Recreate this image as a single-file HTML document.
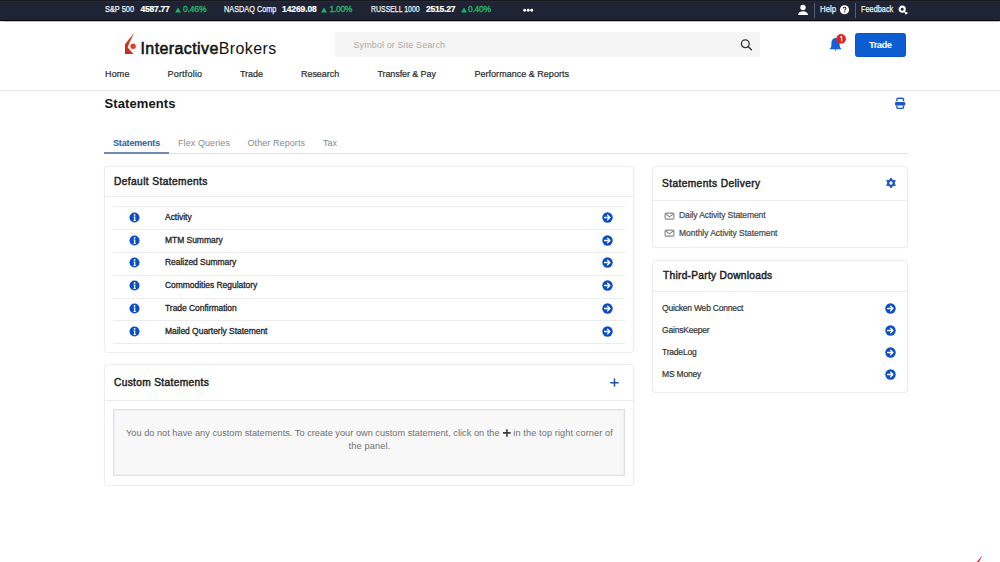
<!DOCTYPE html>
<html><head><meta charset="utf-8"><style>
*{margin:0;padding:0;box-sizing:border-box}
html,body{width:1000px;height:562px;overflow:hidden;background:#fff;font-family:'Liberation Sans', sans-serif}
.t{position:absolute;white-space:pre}
.ic{position:absolute;line-height:0}
.bx{position:absolute}
.panel{position:absolute;background:#fff;border:1px solid #ededed;border-radius:4px;box-shadow:0 0 1.5px rgba(0,0,0,0.05)}
.hl{position:absolute;height:1px;background:#ececec}
</style></head><body>
<div class="bx" style="left:0;top:0;width:1000px;height:21px;background:#1f2434;border-top:1px solid #18191e;border-bottom:1px solid #07080c;box-shadow:0 0.5px 1px rgba(0,0,0,0.25)"></div><div class="bx" style="left:0;top:1px;width:1000px;height:1px;background:#232a3e"></div>
<div class="bx" style="left:0;top:89.6px;width:1000px;height:1.2px;background:#ebebeb;box-shadow:0 1px 1.5px rgba(0,0,0,0.035)"></div>
<div class="bx" style="left:335px;top:32px;width:425px;height:25px;background:#f5f5f5"></div>
<div class="bx" style="left:855px;top:33px;width:51px;height:24px;background:#0b5dd1;border:1px solid #0a55c2;border-radius:2.5px"></div>
<div class="bx" style="left:104px;top:153px;width:804px;height:1px;background:#e3e3e3"></div>
<div class="bx" style="left:104px;top:152px;width:65px;height:2px;background:#6d8db8"></div>
<div class="panel" style="left:104px;top:166px;width:530px;height:187px"></div>
<div class="hl" style="left:105px;top:196px;width:528px"></div>
<div class="hl" style="left:113px;top:206px;width:512px"></div><div class="hl" style="left:113px;top:229px;width:512px"></div><div class="hl" style="left:113px;top:252px;width:512px"></div><div class="hl" style="left:113px;top:275px;width:512px"></div><div class="hl" style="left:113px;top:298px;width:512px"></div><div class="hl" style="left:113px;top:320px;width:512px"></div><div class="hl" style="left:113px;top:343px;width:512px"></div>
<div class="panel" style="left:104px;top:364px;width:530px;height:122px"></div>
<div class="hl" style="left:105px;top:400px;width:528px"></div>
<div class="bx" style="left:113px;top:409px;width:512px;height:67px;background:#f8f8f8;border:1px solid #e0e0e0;box-shadow:inset 0 0 0 1px #f1f1f1"></div>
<div class="panel" style="left:652px;top:166px;width:256px;height:82px"></div>
<div class="hl" style="left:653px;top:200px;width:254px"></div>
<div class="panel" style="left:652px;top:260px;width:256px;height:133px"></div>
<div class="hl" style="left:653px;top:291px;width:254px"></div>
<div id="sp" class="t" style="left:104.5px;top:4.78px;font-size:8.5px;line-height:8.5px;font-weight:400;color:#eef0f3;letter-spacing:0px;-webkit-text-stroke:0.25px #eef0f3;transform-origin:0 0;transform:scaleX(0.87)">S&amp;P 500</div><div id="sp_v" class="t" style="left:140.5px;top:4.78px;font-size:8.5px;line-height:8.5px;font-weight:700;color:#fff;letter-spacing:-0.25px;-webkit-text-stroke:0.2px #fff">4587.77</div><div id="sp_p" class="t" style="left:183px;top:4.78px;font-size:8.5px;line-height:8.5px;font-weight:400;color:#27b36b;letter-spacing:-0.15px;-webkit-text-stroke:0.35px #27b36b">0.46%</div><div id="nq" class="t" style="left:223.9px;top:4.78px;font-size:8.5px;line-height:8.5px;font-weight:400;color:#eef0f3;letter-spacing:0px;-webkit-text-stroke:0.25px #eef0f3;transform-origin:0 0;transform:scaleX(0.86)">NASDAQ Comp</div><div id="nq_v" class="t" style="left:282px;top:4.78px;font-size:8.5px;line-height:8.5px;font-weight:700;color:#fff;letter-spacing:-0.1px;-webkit-text-stroke:0.2px #fff">14269.08</div><div id="nq_p" class="t" style="left:329.5px;top:4.78px;font-size:8.5px;line-height:8.5px;font-weight:400;color:#27b36b;letter-spacing:-0.3px;-webkit-text-stroke:0.35px #27b36b">1.00%</div><div id="ru" class="t" style="left:370.9px;top:4.78px;font-size:8.5px;line-height:8.5px;font-weight:400;color:#eef0f3;letter-spacing:0px;-webkit-text-stroke:0.25px #eef0f3;transform-origin:0 0;transform:scaleX(0.815)">RUSSELL 1000</div><div id="ru_v" class="t" style="left:426px;top:4.78px;font-size:8.5px;line-height:8.5px;font-weight:700;color:#fff;letter-spacing:-0.2px;-webkit-text-stroke:0.2px #fff">2515.27</div><div id="ru_p" class="t" style="left:468px;top:4.78px;font-size:8.5px;line-height:8.5px;font-weight:400;color:#27b36b;letter-spacing:-0.25px;-webkit-text-stroke:0.35px #27b36b">0.40%</div><div id="help" class="t" style="left:819.7px;top:4.78px;font-size:8.5px;line-height:8.5px;font-weight:400;color:#eef0f3;letter-spacing:0px;-webkit-text-stroke:0.25px #eef0f3;transform-origin:0 0;transform:scaleX(0.92)">Help</div><div id="fb" class="t" style="left:860.9px;top:4.78px;font-size:8.5px;line-height:8.5px;font-weight:400;color:#eef0f3;letter-spacing:0px;-webkit-text-stroke:0.25px #eef0f3;transform-origin:0 0;transform:scaleX(0.865)">Feedback</div><div id="logo" class="t" style="left:140.5px;top:40.80px;font-size:16px;line-height:16px;font-weight:400;color:#111;letter-spacing:0.4px;"><span style="-webkit-text-stroke:0.55px #111">Interactive</span>Brokers</div><div id="srch" class="t" style="left:353.5px;top:41.15px;font-size:9px;line-height:9px;font-weight:400;color:#ababab;letter-spacing:0.1px;">Symbol or Site Search</div><div id="trade" class="t" style="left:869px;top:39.92px;font-size:9.5px;line-height:9.5px;font-weight:700;color:#fff;letter-spacing:-0.6px;">Trade</div><div id="n1" class="t" style="left:105px;top:70.35px;font-size:9px;line-height:9px;font-weight:400;color:#2b2b2b;letter-spacing:0.15px;-webkit-text-stroke:0.2px #2b2b2b">Home</div><div id="n2" class="t" style="left:167.5px;top:70.35px;font-size:9px;line-height:9px;font-weight:400;color:#2b2b2b;letter-spacing:0.2px;-webkit-text-stroke:0.2px #2b2b2b">Portfolio</div><div id="n3" class="t" style="left:240px;top:70.35px;font-size:9px;line-height:9px;font-weight:400;color:#2b2b2b;letter-spacing:-0.05px;-webkit-text-stroke:0.2px #2b2b2b">Trade</div><div id="n4" class="t" style="left:301px;top:70.35px;font-size:9px;line-height:9px;font-weight:400;color:#2b2b2b;letter-spacing:-0.05px;-webkit-text-stroke:0.2px #2b2b2b">Research</div><div id="n5" class="t" style="left:377.5px;top:70.35px;font-size:9px;line-height:9px;font-weight:400;color:#2b2b2b;letter-spacing:-0.1px;-webkit-text-stroke:0.2px #2b2b2b">Transfer &amp; Pay</div><div id="n6" class="t" style="left:474.5px;top:70.35px;font-size:9px;line-height:9px;font-weight:400;color:#2b2b2b;letter-spacing:0.02px;-webkit-text-stroke:0.2px #2b2b2b">Performance &amp; Reports</div><div id="title" class="t" style="left:104.5px;top:96.95px;font-size:13px;line-height:13px;font-weight:700;color:#151515;letter-spacing:0.1px;">Statements</div><div id="tab1" class="t" style="left:113px;top:139.05px;font-size:9px;line-height:9px;font-weight:700;color:#2a5ba6;letter-spacing:-0.15px;">Statements</div><div id="tab2" class="t" style="left:178px;top:139.05px;font-size:9px;line-height:9px;font-weight:400;color:#8a8a8a;letter-spacing:0.08px;">Flex Queries</div><div id="tab3" class="t" style="left:247.5px;top:139.05px;font-size:9px;line-height:9px;font-weight:400;color:#8a8a8a;letter-spacing:0.08px;">Other Reports</div><div id="tab4" class="t" style="left:323px;top:139.05px;font-size:9px;line-height:9px;font-weight:400;color:#8a8a8a;letter-spacing:0px;">Tax</div><div id="ds" class="t" style="left:114px;top:177.13px;font-size:10.2px;line-height:10.2px;font-weight:400;color:#1e1e1e;letter-spacing:0.4px;-webkit-text-stroke:0.45px #1e1e1e">Default Statements</div><div id="r0" class="t" style="left:165px;top:212.78px;font-size:8.5px;line-height:8.5px;font-weight:400;color:#262626;letter-spacing:-0.04px;-webkit-text-stroke:0.3px #262626">Activity</div><div id="r1" class="t" style="left:165px;top:235.58px;font-size:8.5px;line-height:8.5px;font-weight:400;color:#262626;letter-spacing:-0.04px;-webkit-text-stroke:0.3px #262626">MTM Summary</div><div id="r2" class="t" style="left:165px;top:258.38px;font-size:8.5px;line-height:8.5px;font-weight:400;color:#262626;letter-spacing:-0.04px;-webkit-text-stroke:0.3px #262626">Realized Summary</div><div id="r3" class="t" style="left:165px;top:281.17px;font-size:8.5px;line-height:8.5px;font-weight:400;color:#262626;letter-spacing:-0.04px;-webkit-text-stroke:0.3px #262626">Commodities Regulatory</div><div id="r4" class="t" style="left:165px;top:303.97px;font-size:8.5px;line-height:8.5px;font-weight:400;color:#262626;letter-spacing:-0.04px;-webkit-text-stroke:0.3px #262626">Trade Confirmation</div><div id="r5" class="t" style="left:165px;top:326.77px;font-size:8.5px;line-height:8.5px;font-weight:400;color:#262626;letter-spacing:-0.04px;-webkit-text-stroke:0.3px #262626">Mailed Quarterly Statement</div><div id="cs" class="t" style="left:114px;top:377.93px;font-size:10.2px;line-height:10.2px;font-weight:400;color:#1e1e1e;letter-spacing:0.33px;-webkit-text-stroke:0.45px #1e1e1e">Custom Statements</div><div id="msg1" class="t" style="left:126px;top:429.18px;font-size:9.2px;line-height:9.2px;font-weight:400;color:#707070;letter-spacing:0.02px;">You do not have any custom statements. To create your own custom statement, click on the</div><div id="msg2" class="t" style="left:513.3px;top:429.18px;font-size:9.2px;line-height:9.2px;font-weight:400;color:#707070;letter-spacing:0.1px;">in the top right corner of</div><div id="msg3" class="t" style="left:348.5px;top:442.18px;font-size:9.2px;line-height:9.2px;font-weight:400;color:#707070;letter-spacing:0.15px;">the panel.</div><div id="sd" class="t" style="left:662px;top:178.63px;font-size:10.2px;line-height:10.2px;font-weight:400;color:#1e1e1e;letter-spacing:0.39px;-webkit-text-stroke:0.45px #1e1e1e">Statements Delivery</div><div id="d1" class="t" style="left:679px;top:211.08px;font-size:8.5px;line-height:8.5px;font-weight:400;color:#444;letter-spacing:-0.1px;-webkit-text-stroke:0.2px #444">Daily Activity Statement</div><div id="d2" class="t" style="left:679px;top:228.58px;font-size:8.5px;line-height:8.5px;font-weight:400;color:#444;letter-spacing:-0.05px;-webkit-text-stroke:0.2px #444">Monthly Activity Statement</div><div id="tp" class="t" style="left:663px;top:271.13px;font-size:10.2px;line-height:10.2px;font-weight:400;color:#1e1e1e;letter-spacing:0.28px;-webkit-text-stroke:0.45px #1e1e1e">Third-Party Downloads</div><div id="q0" class="t" style="left:662px;top:303.77px;font-size:8.5px;line-height:8.5px;font-weight:400;color:#333;letter-spacing:-0.2px;-webkit-text-stroke:0.2px #333">Quicken Web Connect</div><div id="q1" class="t" style="left:662px;top:325.77px;font-size:8.5px;line-height:8.5px;font-weight:400;color:#333;letter-spacing:-0.2px;-webkit-text-stroke:0.2px #333">GainsKeeper</div><div id="q2" class="t" style="left:662px;top:348.27px;font-size:8.5px;line-height:8.5px;font-weight:400;color:#333;letter-spacing:-0.2px;-webkit-text-stroke:0.2px #333">TradeLog</div><div id="q3" class="t" style="left:662px;top:370.27px;font-size:8.5px;line-height:8.5px;font-weight:400;color:#333;letter-spacing:-0.2px;-webkit-text-stroke:0.2px #333">MS Money</div>
<div class="ic" style="left:129.3px;top:211.7px"><svg width="11" height="11" viewBox="0 0 11 11"><circle cx="5.5" cy="5.5" r="5.05" fill="#0b4fc4"/><circle cx="5.6" cy="2.9" r="0.9" fill="#fff"/><path d="M4.6 4.6h1.7v3.6h0.6v0.9H4.4V8.2h0.6V5.5h-0.4z" fill="#fff"/></svg></div><div class="ic" style="left:602.1px;top:211.7px"><svg width="11" height="11" viewBox="0 0 11 11"><circle cx="5.5" cy="5.5" r="5.2" fill="#0b4fc4"/><path d="M2.6 5.5h5M5.6 3.2l2.3 2.3-2.3 2.3" stroke="#fff" stroke-width="1.3" fill="none" stroke-linecap="round" stroke-linejoin="round"/></svg></div><div class="ic" style="left:129.3px;top:234.5px"><svg width="11" height="11" viewBox="0 0 11 11"><circle cx="5.5" cy="5.5" r="5.05" fill="#0b4fc4"/><circle cx="5.6" cy="2.9" r="0.9" fill="#fff"/><path d="M4.6 4.6h1.7v3.6h0.6v0.9H4.4V8.2h0.6V5.5h-0.4z" fill="#fff"/></svg></div><div class="ic" style="left:602.1px;top:234.5px"><svg width="11" height="11" viewBox="0 0 11 11"><circle cx="5.5" cy="5.5" r="5.2" fill="#0b4fc4"/><path d="M2.6 5.5h5M5.6 3.2l2.3 2.3-2.3 2.3" stroke="#fff" stroke-width="1.3" fill="none" stroke-linecap="round" stroke-linejoin="round"/></svg></div><div class="ic" style="left:129.3px;top:257.3px"><svg width="11" height="11" viewBox="0 0 11 11"><circle cx="5.5" cy="5.5" r="5.05" fill="#0b4fc4"/><circle cx="5.6" cy="2.9" r="0.9" fill="#fff"/><path d="M4.6 4.6h1.7v3.6h0.6v0.9H4.4V8.2h0.6V5.5h-0.4z" fill="#fff"/></svg></div><div class="ic" style="left:602.1px;top:257.3px"><svg width="11" height="11" viewBox="0 0 11 11"><circle cx="5.5" cy="5.5" r="5.2" fill="#0b4fc4"/><path d="M2.6 5.5h5M5.6 3.2l2.3 2.3-2.3 2.3" stroke="#fff" stroke-width="1.3" fill="none" stroke-linecap="round" stroke-linejoin="round"/></svg></div><div class="ic" style="left:129.3px;top:280.1px"><svg width="11" height="11" viewBox="0 0 11 11"><circle cx="5.5" cy="5.5" r="5.05" fill="#0b4fc4"/><circle cx="5.6" cy="2.9" r="0.9" fill="#fff"/><path d="M4.6 4.6h1.7v3.6h0.6v0.9H4.4V8.2h0.6V5.5h-0.4z" fill="#fff"/></svg></div><div class="ic" style="left:602.1px;top:280.1px"><svg width="11" height="11" viewBox="0 0 11 11"><circle cx="5.5" cy="5.5" r="5.2" fill="#0b4fc4"/><path d="M2.6 5.5h5M5.6 3.2l2.3 2.3-2.3 2.3" stroke="#fff" stroke-width="1.3" fill="none" stroke-linecap="round" stroke-linejoin="round"/></svg></div><div class="ic" style="left:129.3px;top:302.9px"><svg width="11" height="11" viewBox="0 0 11 11"><circle cx="5.5" cy="5.5" r="5.05" fill="#0b4fc4"/><circle cx="5.6" cy="2.9" r="0.9" fill="#fff"/><path d="M4.6 4.6h1.7v3.6h0.6v0.9H4.4V8.2h0.6V5.5h-0.4z" fill="#fff"/></svg></div><div class="ic" style="left:602.1px;top:302.9px"><svg width="11" height="11" viewBox="0 0 11 11"><circle cx="5.5" cy="5.5" r="5.2" fill="#0b4fc4"/><path d="M2.6 5.5h5M5.6 3.2l2.3 2.3-2.3 2.3" stroke="#fff" stroke-width="1.3" fill="none" stroke-linecap="round" stroke-linejoin="round"/></svg></div><div class="ic" style="left:129.3px;top:325.7px"><svg width="11" height="11" viewBox="0 0 11 11"><circle cx="5.5" cy="5.5" r="5.05" fill="#0b4fc4"/><circle cx="5.6" cy="2.9" r="0.9" fill="#fff"/><path d="M4.6 4.6h1.7v3.6h0.6v0.9H4.4V8.2h0.6V5.5h-0.4z" fill="#fff"/></svg></div><div class="ic" style="left:602.1px;top:325.7px"><svg width="11" height="11" viewBox="0 0 11 11"><circle cx="5.5" cy="5.5" r="5.2" fill="#0b4fc4"/><path d="M2.6 5.5h5M5.6 3.2l2.3 2.3-2.3 2.3" stroke="#fff" stroke-width="1.3" fill="none" stroke-linecap="round" stroke-linejoin="round"/></svg></div><div class="ic" style="left:885px;top:302.6px"><svg width="11" height="11" viewBox="0 0 11 11"><circle cx="5.5" cy="5.5" r="5.2" fill="#0b4fc4"/><path d="M2.6 5.5h5M5.6 3.2l2.3 2.3-2.3 2.3" stroke="#fff" stroke-width="1.3" fill="none" stroke-linecap="round" stroke-linejoin="round"/></svg></div><div class="ic" style="left:885px;top:324.5px"><svg width="11" height="11" viewBox="0 0 11 11"><circle cx="5.5" cy="5.5" r="5.2" fill="#0b4fc4"/><path d="M2.6 5.5h5M5.6 3.2l2.3 2.3-2.3 2.3" stroke="#fff" stroke-width="1.3" fill="none" stroke-linecap="round" stroke-linejoin="round"/></svg></div><div class="ic" style="left:885px;top:347.2px"><svg width="11" height="11" viewBox="0 0 11 11"><circle cx="5.5" cy="5.5" r="5.2" fill="#0b4fc4"/><path d="M2.6 5.5h5M5.6 3.2l2.3 2.3-2.3 2.3" stroke="#fff" stroke-width="1.3" fill="none" stroke-linecap="round" stroke-linejoin="round"/></svg></div><div class="ic" style="left:885px;top:369.3px"><svg width="11" height="11" viewBox="0 0 11 11"><circle cx="5.5" cy="5.5" r="5.2" fill="#0b4fc4"/><path d="M2.6 5.5h5M5.6 3.2l2.3 2.3-2.3 2.3" stroke="#fff" stroke-width="1.3" fill="none" stroke-linecap="round" stroke-linejoin="round"/></svg></div><svg class="ic" style="left:174.5px;top:6.5px" width="6" height="6" viewBox="0 0 6 6"><path d="M3 0.6L5.9 5.6H0.1z" fill="#1fb467"/></svg><svg class="ic" style="left:321px;top:6.5px" width="6" height="6" viewBox="0 0 6 6"><path d="M3 0.6L5.9 5.6H0.1z" fill="#1fb467"/></svg><svg class="ic" style="left:460.5px;top:6.5px" width="6" height="6" viewBox="0 0 6 6"><path d="M3 0.6L5.9 5.6H0.1z" fill="#1fb467"/></svg><svg class="ic" style="left:520px;top:7px" width="16" height="6" viewBox="0 0 16 6"><circle cx="4.7" cy="3.3" r="1.45" fill="#fff"/><circle cx="8.2" cy="3.3" r="1.45" fill="#fff"/><circle cx="11.7" cy="3.3" r="1.45" fill="#fff"/></svg><svg class="ic" style="left:796px;top:3px" width="14" height="14" viewBox="0 0 14 14"><circle cx="7" cy="4.5" r="2.7" fill="#fff"/><path d="M1.9 12.1C2.1 9.6 4.3 8.3 7 8.3S11.9 9.6 12.1 12.1z" fill="#fff"/></svg><div class="bx" style="left:813.5px;top:3px;width:1px;height:15px;background:#596073"></div><div class="bx" style="left:855px;top:3px;width:1px;height:15px;background:#596073"></div><svg class="ic" style="left:839px;top:4px" width="12" height="12" viewBox="0 0 12 12"><circle cx="5.5" cy="5.75" r="4.6" fill="#fff"/><path d="M4.2 4.6C4.2 3.8 4.8 3.3 5.6 3.3S6.9 3.8 6.9 4.5C6.9 5.3 5.7 5.4 5.7 6.4" stroke="#1d2232" stroke-width="1.1" fill="none"/><circle cx="5.7" cy="7.9" r="0.65" fill="#1d2232"/></svg><svg class="ic" style="left:897px;top:4px" width="12" height="12" viewBox="0 0 12 12"><circle cx="5.2" cy="5.2" r="2.55" fill="none" stroke="#fff" stroke-width="2.1"/><path d="M7.0 7.2L10.7 8.4L10.2 9.9L8.4 10.6z" fill="#fff"/></svg><svg class="ic" style="left:122px;top:30px" width="16" height="26" viewBox="0 0 16 26"><defs><linearGradient id="lg" x1="0" y1="1" x2="1" y2="0"><stop offset="0" stop-color="#c0261b"/><stop offset="1" stop-color="#ea4a2e"/></linearGradient></defs><path d="M12.2 2.6L3 14.3V24H11.6L5.7 17.4L6.2 15.8z" fill="url(#lg)"/><circle cx="11.1" cy="16.2" r="2.7" fill="#e23a2b"/></svg><svg class="ic" style="left:739px;top:38px" width="14" height="14" viewBox="0 0 14 14"><circle cx="6.3" cy="5.7" r="3.9" fill="none" stroke="#333" stroke-width="1.3"/><path d="M9.1 8.6L12.4 11.7" stroke="#333" stroke-width="1.4" stroke-linecap="round"/></svg><svg class="ic" style="left:827px;top:32px" width="22" height="22" viewBox="0 0 22 22"><path d="M2.3 17.2C3.9 16.2 4.4 14.8 4.4 12.6V10.9C4.4 8.2 6.1 6.1 8.5 6.1S12.6 8.2 12.6 10.9V12.6C12.6 14.8 13.1 16.2 14.8 17.2z" fill="#1b5fd6"/><path d="M7.3 17.4h2.4l-1.2 1.6z" fill="#1b5fd6"/><circle cx="14.1" cy="6.9" r="4.8" fill="#e4221c"/><path d="M13.2 5.3L14.6 4.5V9.5" stroke="#fff" stroke-width="1.15" fill="none"/></svg><svg class="ic" style="left:893px;top:96px" width="14" height="14" viewBox="0 0 14 14"><path d="M3.9 5.3V3.6C3.9 2.8 4.5 2.3 5.3 2.3H9.1C9.9 2.3 10.5 2.8 10.5 3.6V5.3" stroke="#1c58c4" stroke-width="1.4" fill="none"/><rect x="2" y="5.9" width="10.3" height="3.6" rx="1.3" fill="#1c58c4"/><path d="M3.9 9.4V11.2C3.9 12 4.5 12.4 5.3 12.4H9.1C9.9 12.4 10.5 12 10.5 11.2V9.4" stroke="#1c58c4" stroke-width="1.4" fill="none"/></svg><svg class="ic" style="left:885.8px;top:177.9px" width="10" height="10" viewBox="0 0 10 10"><polygon points="5.00,0.00 6.60,2.23 9.33,2.50 8.20,5.00 9.33,7.50 6.60,7.77 5.00,10.00 3.40,7.77 0.67,7.50 1.80,5.00 0.67,2.50 3.40,2.23" fill="#1c58c4" stroke="#1c58c4" stroke-width="0.9" stroke-linejoin="round"/><circle cx="5" cy="5" r="1.65" fill="#fff"/></svg><svg class="ic" style="left:663.5px;top:211.5px" width="11" height="8" viewBox="0 0 11 8"><rect x="1.1" y="1.1" width="8.8" height="6.0" rx="1" fill="none" stroke="#8a8a8a" stroke-width="1.15"/><path d="M1.5 1.8L5.5 4.9L9.5 1.8" fill="none" stroke="#8a8a8a" stroke-width="1.1"/></svg><svg class="ic" style="left:663.5px;top:229.2px" width="11" height="8" viewBox="0 0 11 8"><rect x="1.1" y="1.1" width="8.8" height="6.0" rx="1" fill="none" stroke="#8a8a8a" stroke-width="1.15"/><path d="M1.5 1.8L5.5 4.9L9.5 1.8" fill="none" stroke="#8a8a8a" stroke-width="1.1"/></svg><svg class="ic" style="left:609px;top:377px" width="11" height="11" viewBox="0 0 11 11"><path d="M5.5 1.6V9.8M1.3 5.7H9.7" stroke="#1f4fa8" stroke-width="1.5"/></svg><svg class="ic" style="left:502px;top:428px" width="10" height="10" viewBox="0 0 10 10"><path d="M4.9 1.3V8.7M1 4.9H8.7" stroke="#3e3e3e" stroke-width="1.6"/></svg><svg class="ic" style="left:972px;top:550px" width="16" height="12" viewBox="0 0 16 12"><path d="M9.9 5.9L10.1 6.3L6.9 12H4.6z" fill="#e02a3a"/></svg>
</body></html>
